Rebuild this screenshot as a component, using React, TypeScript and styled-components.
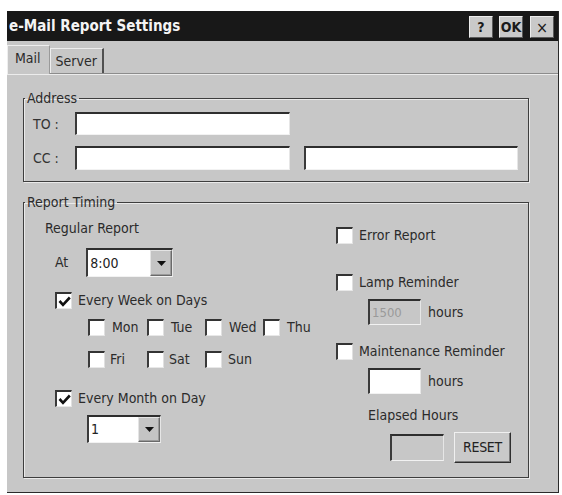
import React from "react";
import styled, { createGlobalStyle } from "styled-components";

const FONT = `"DejaVu Sans Condensed", "DejaVu Sans", "Liberation Sans", sans-serif`;

const Global = createGlobalStyle`
  * { box-sizing: border-box; }
  html, body { margin: 0; padding: 0; background: #ffffff; }
  body { font-family: ${FONT}; font-size: 14px; color: #2b2b2b; }
`;

const Window = styled.div`
  margin: 11px 0 0 7px;
  width: 552px;
  height: 482px;
  background: #c7c7c7;
  border-right: 1px solid #2a2a2a;
  border-bottom: 1px solid #2a2a2a;
  display: flex;
  flex-direction: column;
`;

const TitleBar = styled.div`
  height: 30px;
  background: #181818;
  display: flex;
  align-items: center;
  padding: 0 4px 0 2px;
`;

const Title = styled.div`
  flex: 1;
  color: #f4f4f4;
  font-weight: bold;
  font-size: 15px;
`;

const TitleButton = styled.div<{ $ml: number; $thin?: boolean }>`
  width: 24px;
  height: 22px;
  margin-left: ${(p) => p.$ml}px;
  margin-top: 2px;
  background: #c9c9c9;
  border: 1px solid;
  border-color: #ececec #5a5a5a #5a5a5a #ececec;
  display: flex;
  align-items: center;
  justify-content: center;
  font-weight: ${(p) => (p.$thin ? "normal" : "bold")};
  font-size: ${(p) => (p.$thin ? 16 : 14)}px;
  color: #1a1a1a;
`;

const TabStrip = styled.div`
  height: 33px;
  display: flex;
  align-items: flex-end;
  border-bottom: 1px solid #8c8c8c;
  box-shadow: 0 1px 0 #ececec;
`;

const Tab = styled.div<{ $active?: boolean }>`
  height: ${(p) => (p.$active ? 29 : 25)}px;
  padding: ${(p) => (p.$active ? "0 8px 4px 7px" : "0 5px 1px 5px")};
  display: flex;
  align-items: center;
  border-left: 1px solid #eeeeee;
  border-top: 1px solid #eeeeee;
  border-right: ${(p) => (p.$active ? "1px solid #9a9a9a" : "2px solid #505050")};
  margin-bottom: ${(p) => (p.$active ? "-1px" : "0")};
  background: #c7c7c7;
  font-size: 14px;
`;

const Page = styled.div`
  flex: 1;
  padding: 15px 29px 0 16px;
  display: flex;
  flex-direction: column;
`;

const Group = styled.fieldset<{ $mt?: number }>`
  margin: ${(p) => p.$mt ?? 0}px 0 0 0;
  padding: 0;
  min-width: 0;
  border: 1px solid #3e3e3e;
  box-shadow: 1px 1px 0 #eaeaea, inset 1px 1px 0 #eaeaea;
`;

const Legend = styled.legend`
  margin-left: 1px;
  padding: 0 2px;
  font-size: 14px;
  line-height: 18px;
  color: #2b2b2b;
`;

const AddressBody = styled.div`
  padding: 5px 0 11px 9px;
  display: grid;
  grid-template-columns: 42px 229px 214px;
  row-gap: 11px;
  align-items: center;
`;

const FieldLabel = styled.div`
  font-size: 14px;
  color: #333;
`;

const Input = styled.div<{ $w?: number; $h?: number; $disabled?: boolean }>`
  width: ${(p) => (p.$w ? `${p.$w}px` : "auto")};
  height: ${(p) => p.$h ?? 23}px;
  background: ${(p) => (p.$disabled ? "#c7c7c7" : "#ffffff")};
  border-top: 2px solid #2e2e2e;
  border-left: 2px solid #3a3a3a;
  border-right: 1px solid #e6e6e6;
  border-bottom: 1px solid #f2f2f2;
  color: #9a9a9a;
  font-size: 13px;
  display: flex;
  align-items: center;
  padding-left: 2px;
`;

const TimingBody = styled.div`
  height: 266px;
  display: flex;
  padding-left: 21px;
`;

const LeftCol = styled.div`
  width: 291px;
  display: flex;
  flex-direction: column;
`;

const RightCol = styled.div`
  flex: 1;
  display: flex;
  flex-direction: column;
`;

const Text = styled.div<{ $mt?: number; $ml?: number }>`
  margin-top: ${(p) => p.$mt ?? 0}px;
  margin-left: ${(p) => p.$ml ?? 0}px;
  line-height: 18px;
  font-size: 14px;
  color: #2b2b2b;
`;

const Row = styled.div<{ $mt?: number; $ml?: number; $gap?: number }>`
  display: flex;
  align-items: center;
  margin-top: ${(p) => p.$mt ?? 0}px;
  margin-left: ${(p) => p.$ml ?? 0}px;
  gap: ${(p) => p.$gap ?? 6}px;
  font-size: 14px;
  line-height: 17px;
`;

const Box = styled.div`
  width: 17px;
  height: 17px;
  flex: none;
  background: #fff;
  border-top: 2px solid #333;
  border-left: 2px solid #3a3a3a;
  border-right: 1px solid #e0e0e0;
  border-bottom: 1px solid #e8e8e8;
  display: flex;
  align-items: center;
  justify-content: center;
`;

const Check = ({ checked, label }: { checked?: boolean; label: string }) => (
  <>
    <Box>
      {checked && (
        <svg width="13" height="11" viewBox="0 0 13 11">
          <polyline points="1.5,5 5,8.8 11.8,1.5" fill="none" stroke="#111" strokeWidth="2.6" />
        </svg>
      )}
    </Box>
    <span>{label}</span>
  </>
);

const Days = styled.div`
  margin: 10px 0 0 43px;
  display: grid;
  grid-template-columns: 59px 58px 58px auto;
  row-gap: 15px;
`;

const DayCell = styled.div<{ $gap: number }>`
  display: flex;
  align-items: center;
  gap: ${(p) => p.$gap}px;
  font-size: 14px;
  line-height: 17px;
`;

const Combo = styled.div<{ $w: number; $h: number }>`
  width: ${(p) => p.$w}px;
  height: ${(p) => p.$h}px;
  background: #fff;
  border-top: 2px solid #2e2e2e;
  border-left: 2px solid #3a3a3a;
  border-right: 1px solid #e6e6e6;
  border-bottom: 1px solid #f2f2f2;
  display: flex;
  align-items: stretch;
`;

const ComboText = styled.div`
  flex: 1;
  display: flex;
  align-items: center;
  padding-left: 2px;
  font-size: 14px;
  color: #222;
`;

const ComboButton = styled.div`
  width: 22px;
  background: #c4c4c4;
  border: 1px solid;
  border-color: #e4e4e4 #6a6a6a #6a6a6a #e4e4e4;
  box-shadow: inset -1px -1px 0 #9a9a9a;
  display: flex;
  align-items: center;
  justify-content: center;
`;

const Arrow = () => (
  <svg width="9" height="5" viewBox="0 0 9 5">
    <polygon points="0,0 9,0 4.5,5" fill="#111" />
  </svg>
);

const Button = styled.div`
  width: 57px;
  height: 31px;
  background: #c9c9c9;
  border: 1px solid;
  border-color: #f0f0f0 #2e2e2e #2e2e2e #f0f0f0;
  box-shadow: inset -1px -1px 0 #7a7a7a;
  display: flex;
  align-items: center;
  justify-content: center;
  font-size: 14px;
  color: #222;
  letter-spacing: -0.3px;
`;

export default function App() {
  return (
    <>
      <Global />
      <Window>
        <TitleBar>
          <Title>e-Mail Report Settings</Title>
          <TitleButton $ml={0}>?</TitleButton>
          <TitleButton $ml={6}>OK</TitleButton>
          <TitleButton $ml={7} $thin>×</TitleButton>
        </TitleBar>
        <TabStrip>
          <Tab $active>Mail</Tab>
          <Tab>Server</Tab>
        </TabStrip>
        <Page>
          <Group>
            <Legend>Address</Legend>
            <AddressBody>
              <FieldLabel>TO :</FieldLabel>
              <Input $w={215} />
              <div />
              <FieldLabel>CC :</FieldLabel>
              <Input $w={215} $h={24} />
              <Input $w={214} $h={24} />
            </AddressBody>
          </Group>
          <Group $mt={11}>
            <Legend>Report Timing</Legend>
            <TimingBody>
              <LeftCol>
                <Text $mt={8}>Regular Report</Text>
                <Row $mt={11} $ml={10} $gap={18}>
                  <span>At</span>
                  <Combo $w={87} $h={29}>
                    <ComboText>8:00</ComboText>
                    <ComboButton>
                      <Arrow />
                    </ComboButton>
                  </Combo>
                </Row>
                <Row $mt={15} $ml={10}>
                  <Check checked label="Every Week on Days" />
                </Row>
                <Days>
                  <DayCell $gap={7}><Check label="Mon" /></DayCell>
                  <DayCell $gap={7}><Check label="Tue" /></DayCell>
                  <DayCell $gap={7}><Check label="Wed" /></DayCell>
                  <DayCell $gap={7}><Check label="Thu" /></DayCell>
                  <DayCell $gap={5}><Check label="Fri" /></DayCell>
                  <DayCell $gap={5}><Check label="Sat" /></DayCell>
                  <DayCell $gap={6}><Check label="Sun" /></DayCell>
                </Days>
                <Row $mt={22} $ml={10}>
                  <Check checked label="Every Month on Day" />
                </Row>
                <Row $mt={8} $ml={42}>
                  <Combo $w={74} $h={28}>
                    <ComboText>1</ComboText>
                    <ComboButton>
                      <Arrow />
                    </ComboButton>
                  </Combo>
                </Row>
              </LeftCol>
              <RightCol>
                <Row $mt={16}>
                  <Check label="Error Report" />
                </Row>
                <Row $mt={30}>
                  <Check label="Lamp Reminder" />
                </Row>
                <Row $mt={8} $ml={32} $gap={7}>
                  <Input $w={53} $h={26} $disabled>1500</Input>
                  <span>hours</span>
                </Row>
                <Row $mt={18}>
                  <Check label="Maintenance Reminder" />
                </Row>
                <Row $mt={8} $ml={32} $gap={7}>
                  <Input $w={53} $h={26} />
                  <span>hours</span>
                </Row>
                <Text $mt={12} $ml={32}>Elapsed Hours</Text>
                <Row $mt={8} $ml={54} $gap={10}>
                  <Input $w={54} $h={27} $disabled />
                  <Button>RESET</Button>
                </Row>
              </RightCol>
            </TimingBody>
          </Group>
        </Page>
      </Window>
    </>
  );
}
